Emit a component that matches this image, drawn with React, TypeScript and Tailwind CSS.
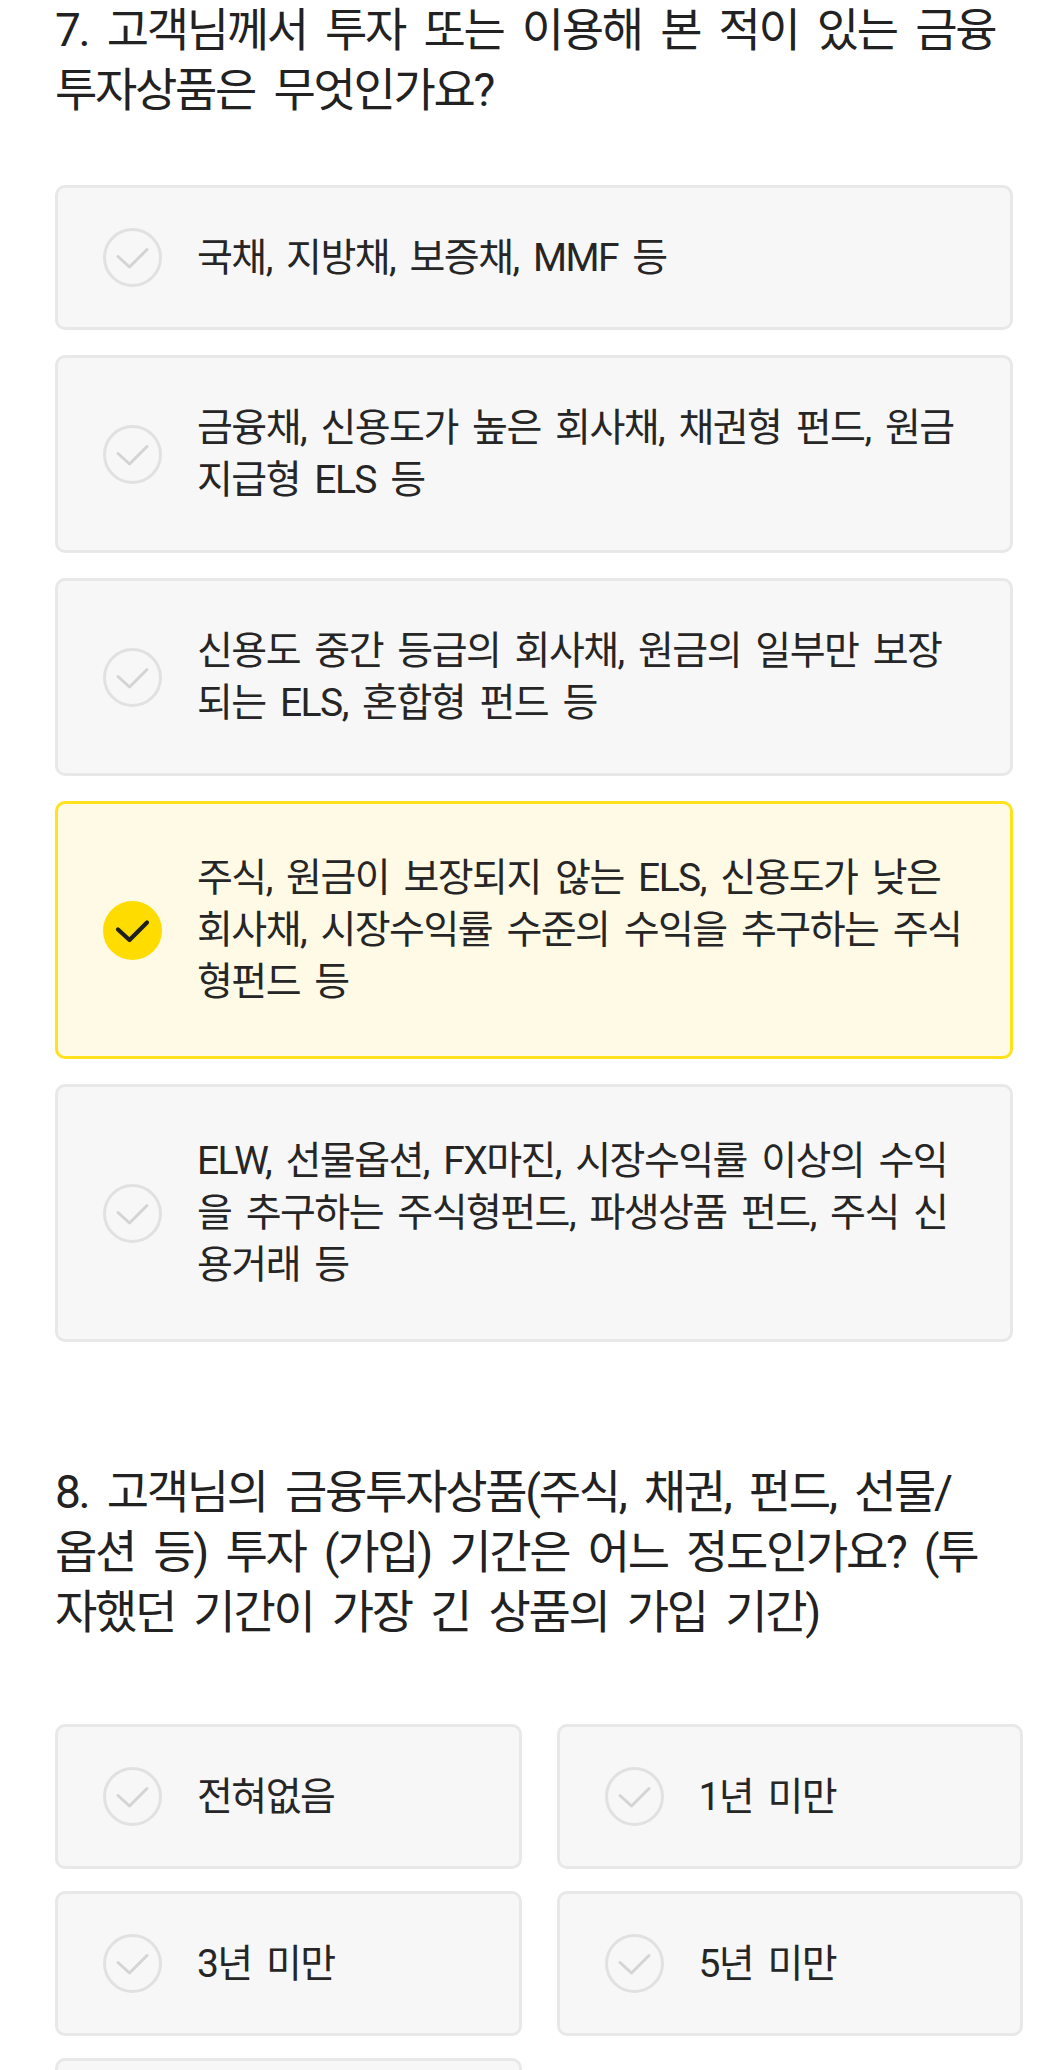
import type { ReactNode } from "react";

type OptionProps = {
  lines: string[];
  selected?: boolean;
  pad?: string;
};

const padByLines: Record<number, string> = {
  1: "py-[40px]",
  2: "py-[44px]",
  3: "py-[48px]",
};

function CheckCircle({ selected = false }: { selected?: boolean }) {
  return (
    <span
      className={`flex h-[59px] w-[59px] shrink-0 items-center justify-center rounded-full border-[3px] ${
        selected ? "border-[#ffdc00] bg-[#ffdc00]" : "border-[#e1e1e1] bg-[#f7f7f7]"
      }`}
    >
      <svg width="53" height="53" viewBox="0 0 53 53" fill="none">
        <path
          d="M12 25.5 L23.5 36 L41 18.5"
          stroke={selected ? "#1f1f1f" : "#d4d4d4"}
          strokeWidth={selected ? 4.2 : 3}
          strokeLinecap="round"
          strokeLinejoin="round"
        />
      </svg>
    </span>
  );
}

function Option({ lines, selected = false, pad }: OptionProps) {
  return (
    <div
      className={`flex items-center rounded-[10px] border-[3px] pl-[45px] pr-[20px] ${
        selected ? "border-[#ffe21c] bg-[#fffae6]" : "border-[#e8e8e8] bg-[#f7f7f7]"
      } ${pad ?? padByLines[lines.length]}`}
    >
      <CheckCircle selected={selected} />
      <p className="ml-[35px] text-[39px] leading-[52px] tracking-[-0.04em] text-[#262626] [word-spacing:0.16em]">
        {lines.map((line, i) => (
          <span key={i} className="block whitespace-nowrap">
            {line}
          </span>
        ))}
      </p>
    </div>
  );
}

function Question({ children }: { children: ReactNode }) {
  return (
    <h2 className="text-[46px] font-normal leading-[60px] tracking-[-0.05em] text-[#222222] [word-spacing:0.2em]">
      {children}
    </h2>
  );
}

const productOptions = [
  { lines: ["국채, 지방채, 보증채, MMF 등"] },
  { lines: ["금융채, 신용도가 높은 회사채, 채권형 펀드, 원금", "지급형 ELS 등"] },
  { lines: ["신용도 중간 등급의 회사채, 원금의 일부만 보장", "되는 ELS, 혼합형 펀드 등"] },
  {
    lines: [
      "주식, 원금이 보장되지 않는 ELS, 신용도가 낮은",
      "회사채, 시장수익률 수준의 수익을 추구하는 주식",
      "형펀드 등",
    ],
    selected: true,
  },
  {
    lines: [
      "ELW, 선물옵션, FX마진, 시장수익률 이상의 수익",
      "을 추구하는 주식형펀드, 파생상품 펀드, 주식 신",
      "용거래 등",
    ],
  },
];

const periodOptions = ["전혀없음", "1년 미만", "3년 미만", "5년 미만", "5년 이상"];

export default function App() {
  return (
    <div className="h-[2070px] w-[1053px] overflow-hidden bg-white pl-[55px] font-[Roboto,'Noto_Sans_CJK_KR','Noto_Sans',sans-serif]">
      <Question>
        <span className="block whitespace-nowrap">7. 고객님께서 투자 또는 이용해 본 적이 있는 금융</span>
        <span className="block whitespace-nowrap">투자상품은 무엇인가요?</span>
      </Question>

      <div className="mt-[65px] flex w-[958px] flex-col gap-[25px]">
        {productOptions.map((opt, i) => (
          <Option key={i} lines={opt.lines} selected={opt.selected} />
        ))}
      </div>

      <div className="mt-[120px]">
        <Question>
          <span className="block whitespace-nowrap">8. 고객님의 금융투자상품(주식, 채권, 펀드, 선물/</span>
          <span className="block whitespace-nowrap">옵션 등) 투자 (가입) 기간은 어느 정도인가요? (투</span>
          <span className="block whitespace-nowrap">자했던 기간이 가장 긴 상품의 가입 기간)</span>
        </Question>
      </div>

      <div className="mt-[82px] grid w-[968px] grid-cols-2 gap-x-[35px] gap-y-[22px]">
        {periodOptions.map((label) => (
          <Option key={label} lines={[label]} pad="py-[40px]" />
        ))}
      </div>
    </div>
  );
}
